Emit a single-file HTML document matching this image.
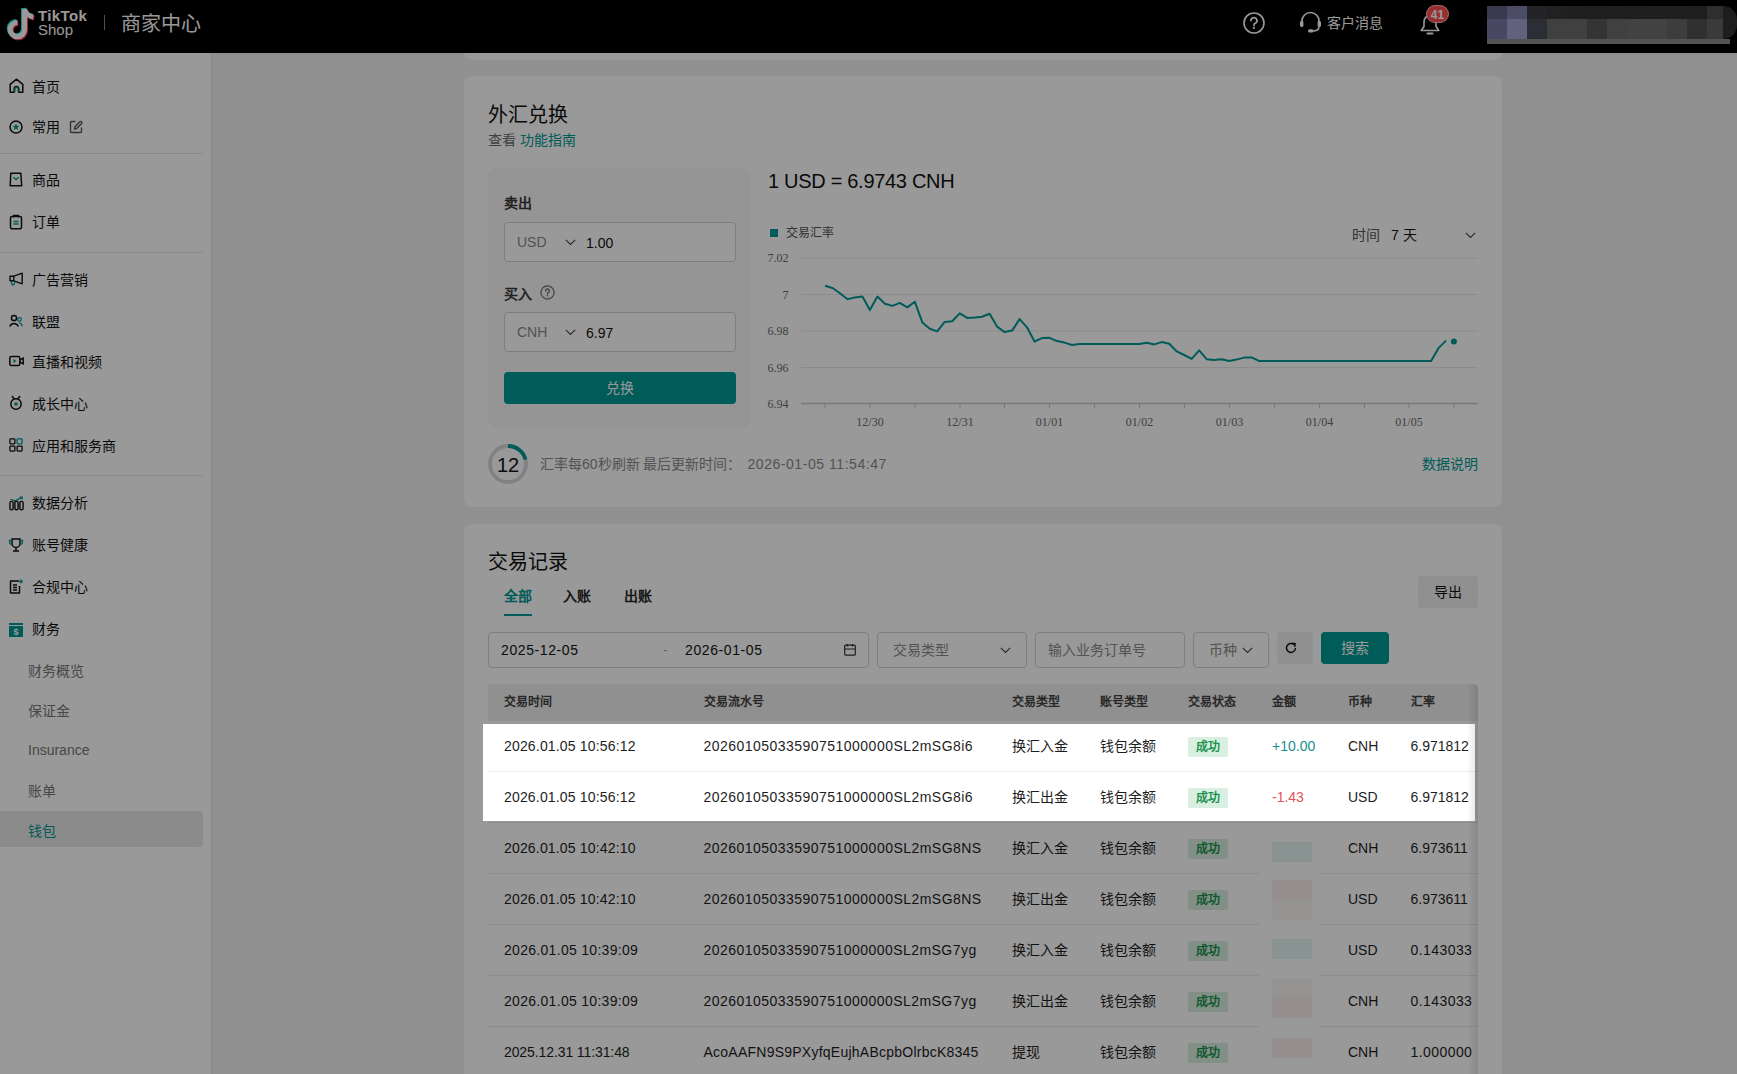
<!DOCTYPE html>
<html lang="zh-CN">
<head>
<meta charset="utf-8">
<style>
*{box-sizing:border-box;margin:0;padding:0}
html,body{width:1737px;height:1074px;overflow:hidden}
body{position:relative;background:#f1f1f1;font-family:"Liberation Sans",sans-serif;color:#121212;font-size:14px}
.t{position:absolute;white-space:nowrap;line-height:20px}
svg{position:absolute;overflow:visible}
#hdr{position:absolute;left:0;top:0;width:1737px;height:53px;background:#000;z-index:10}
#side{position:absolute;left:0;top:53px;width:212px;height:1021px;background:#fff;border-right:1px solid #e2e2e2}
.card{position:absolute;left:464px;width:1038px;background:#fff;border-radius:8px}
#ov{position:absolute;left:0;top:0;width:1737px;height:1074px;background:rgba(0,0,0,0.4);z-index:50}
#spot{position:absolute;left:483px;top:724px;width:992px;height:97px;background:#fff;z-index:60;overflow:hidden}
.nav{left:32px;color:#121212}
.sub{left:28px;color:#777}
.ico{left:9px}
.div{position:absolute;left:0;width:203px;height:1px;background:#e6e6e6}
</style>
</head>
<body>
<!-- HEADER -->
<div id="hdr">
  <svg style="left:7px;top:6px" width="30" height="34" viewBox="0 0 30 34">
    <g fill="none" stroke-width="4.6" stroke-linecap="butt" transform="translate(0.5,0.5) scale(1.1)">
      <path d="M9 14.5a6.5 6.5 0 1 0 6.5 6.5V2.5c1 4 4 6.5 8 7" stroke="#25f4ee" transform="translate(-0.9,-0.9)"/>
      <path d="M9 14.5a6.5 6.5 0 1 0 6.5 6.5V2.5c1 4 4 6.5 8 7" stroke="#fe2c55" transform="translate(0.9,0.9)"/>
      <path d="M9 14.5a6.5 6.5 0 1 0 6.5 6.5V2.5c1 4 4 6.5 8 7" stroke="#fff"/>
    </g>
  </svg>
  <div class="t" style="left:38px;top:6px;font-size:15px;font-weight:bold;color:#fff;line-height:20px;letter-spacing:0.4px">TikTok</div>
  <div class="t" style="left:38px;top:20px;font-size:15px;color:#fff;line-height:20px">Shop</div>
  <div style="position:absolute;left:104px;top:15px;width:1px;height:15px;background:#888"></div>
  <div class="t" style="left:121px;top:11px;font-size:20px;color:#fff;line-height:26px">商家中心</div>
  <svg style="left:1243px;top:12px" width="22" height="22" viewBox="0 0 22 22">
    <circle cx="11" cy="11" r="10" fill="none" stroke="#fff" stroke-width="1.6"/>
    <path d="M8 8.6a3 3 0 1 1 4.2 2.7c-.8.4-1.2.9-1.2 1.7v.6" fill="none" stroke="#fff" stroke-width="1.7" stroke-linecap="round"/>
    <circle cx="11" cy="16" r="1.1" fill="#fff"/>
  </svg>
  <svg style="left:1299px;top:11px" width="23" height="22" viewBox="0 0 23 22">
    <path d="M3 11.5V10a8.5 8.5 0 0 1 17 0v1.5" fill="none" stroke="#fff" stroke-width="1.7"/>
    <rect x="1" y="10" width="3.4" height="6" rx="1.4" fill="#fff"/>
    <rect x="18.6" y="10" width="3.4" height="6" rx="1.4" fill="#fff"/>
    <path d="M20 15.5c0 3-2.5 4.5-6.5 4.5" fill="none" stroke="#fff" stroke-width="1.6"/>
    <rect x="9" y="18.3" width="5.5" height="3.2" rx="1.6" fill="#fff"/>
  </svg>
  <div class="t" style="left:1327px;top:13px;font-size:14px;color:#fff">客户消息</div>
  <svg style="left:1420px;top:13px" width="20" height="23" viewBox="0 0 20 23">
    <path d="M10 2.5c-3.6 0-6 2.8-6 6.3v4.7L1.2 17.5h17.6L16 13.5V8.8c0-3.5-2.4-6.3-6-6.3z" fill="none" stroke="#fff" stroke-width="1.6" stroke-linejoin="round"/>
    <path d="M7.5 20.6h5" stroke="#fff" stroke-width="2" stroke-linecap="round"/>
  </svg>
  <div style="position:absolute;left:1426px;top:5px;width:23px;height:18px;border-radius:9px;background:#ff4d4f;color:#fff;font-size:12px;line-height:18px;text-align:center;border:1px solid #ffb3b3;font-weight:bold">41</div>
  <!-- blurred store -->
<div style="position:absolute;left:1487px;top:6px;width:250px;height:38px">
<div style="position:absolute;left:0px;top:0;width:20px;height:13px;background:#616182"></div>
<div style="position:absolute;left:0px;top:13px;width:20px;height:20px;background:#7878a3"></div>
<div style="position:absolute;left:20px;top:0;width:20px;height:13px;background:#7f7faa"></div>
<div style="position:absolute;left:20px;top:13px;width:20px;height:20px;background:#a3a3d2"></div>
<div style="position:absolute;left:40px;top:0;width:20px;height:13px;background:#3c3c43"></div>
<div style="position:absolute;left:40px;top:13px;width:20px;height:20px;background:#494d57"></div>
<div style="position:absolute;left:60px;top:0;width:20px;height:13px;background:#383838"></div>
<div style="position:absolute;left:60px;top:13px;width:20px;height:20px;background:#6b6b6b"></div>
<div style="position:absolute;left:80px;top:0;width:20px;height:13px;background:#353535"></div>
<div style="position:absolute;left:80px;top:13px;width:20px;height:20px;background:#6b6b6b"></div>
<div style="position:absolute;left:100px;top:0;width:20px;height:13px;background:#333333"></div>
<div style="position:absolute;left:100px;top:13px;width:20px;height:20px;background:#585858"></div>
<div style="position:absolute;left:120px;top:0;width:20px;height:13px;background:#353535"></div>
<div style="position:absolute;left:120px;top:13px;width:20px;height:20px;background:#6b6b6b"></div>
<div style="position:absolute;left:140px;top:0;width:20px;height:13px;background:#333333"></div>
<div style="position:absolute;left:140px;top:13px;width:20px;height:20px;background:#6e6e6e"></div>
<div style="position:absolute;left:160px;top:0;width:20px;height:13px;background:#353535"></div>
<div style="position:absolute;left:160px;top:13px;width:20px;height:20px;background:#6e6e6e"></div>
<div style="position:absolute;left:180px;top:0;width:20px;height:13px;background:#343434"></div>
<div style="position:absolute;left:180px;top:13px;width:20px;height:20px;background:#676767"></div>
<div style="position:absolute;left:200px;top:0;width:20px;height:13px;background:#333333"></div>
<div style="position:absolute;left:200px;top:13px;width:20px;height:20px;background:#505050"></div>
<div style="position:absolute;left:220px;top:0;width:16px;height:13px;background:#4d4d4d"></div>
<div style="position:absolute;left:220px;top:13px;width:16px;height:20px;background:#616161"></div>
<div style="position:absolute;left:236px;top:0;width:14px;height:33px;background:#323232;border-radius:0 17px 17px 0"></div>
<div style="position:absolute;left:0;top:33px;width:243px;height:5px;background:#8a8a8a"></div>
</div>
</div>
<!-- SIDEBAR -->
<div id="side"></div>
<div style="position:absolute;left:0;top:811px;width:203px;height:36px;background:#e8e8e8;border-radius:0 4px 4px 0"></div>
<div class="div" style="top:153px"></div>
<div class="div" style="top:252px"></div>
<div class="div" style="top:475px"></div>
<!-- icons -->
<svg style="left:9px;top:78px" width="15" height="16" viewBox="0 0 15 16"><path d="M1.2 14.2V6.3L7.5 1.2l6.3 5.1v7.9H9.8v-3.4a2.3 2.3 0 0 0-4.6 0v3.4z" fill="none" stroke="#121212" stroke-width="1.5" stroke-linejoin="round"/><path d="M5.9 14v-3a1.6 1.6 0 0 1 3.2 0v3" fill="none" stroke="#009995" stroke-width="1.3"/></svg>
<svg style="left:9px;top:120px" width="14" height="14" viewBox="0 0 14 14"><circle cx="7" cy="7" r="6" fill="none" stroke="#121212" stroke-width="1.5"/><path d="M7 3.6l1 2.1 2.3.3-1.7 1.6.4 2.3L7 8.8 4.9 9.9l.4-2.3L3.6 6l2.3-.3z" fill="#009995"/></svg>
<svg style="left:69px;top:120px" width="14" height="14" viewBox="0 0 14 14"><path d="M6.5 1.5H2.5a1 1 0 0 0-1 1v9a1 1 0 0 0 1 1h9a1 1 0 0 0 1-1V7.5" fill="none" stroke="#555" stroke-width="1.4"/><path d="M5.5 9l.4-2.2 5-5a1.2 1.2 0 0 1 1.7 1.7l-5 5z" fill="none" stroke="#555" stroke-width="1.4" stroke-linejoin="round"/></svg>
<svg style="left:9px;top:172px" width="14" height="15" viewBox="0 0 14 15"><path d="M1.8 1.2h10l.9 12.6H1.2z" fill="none" stroke="#121212" stroke-width="1.5" stroke-linejoin="round"/><path d="M4.3 5.3l2.7 2.3 2.7-2.3" fill="none" stroke="#009995" stroke-width="1.4"/></svg>
<svg style="left:9px;top:214px" width="14" height="16" viewBox="0 0 14 16"><rect x="1.5" y="2.6" width="11" height="12.2" rx="1.5" fill="none" stroke="#121212" stroke-width="1.5"/><path d="M4.6 3.2V1.4h4.8v1.8" fill="none" stroke="#121212" stroke-width="1.4"/><path d="M4.5 7.5h5M4.5 10h5" stroke="#009995" stroke-width="1.3"/></svg>
<svg style="left:9px;top:272px" width="15" height="15" viewBox="0 0 15 15"><path d="M1 4.2h3.8v4.6H1z" fill="none" stroke="#121212" stroke-width="1.4" stroke-linejoin="round"/><path d="M4.8 4.2l8.4-3v10.6l-8.4-3" fill="none" stroke="#121212" stroke-width="1.4" stroke-linejoin="round"/><path d="M2.6 9v2.6a1.4 1.4 0 0 0 2.8 0V9.5" fill="none" stroke="#009995" stroke-width="1.3"/></svg>
<svg style="left:9px;top:314px" width="14" height="14" viewBox="0 0 14 14"><circle cx="5" cy="4" r="2.6" fill="none" stroke="#121212" stroke-width="1.5"/><path d="M0.8 12.5a4.5 4.5 0 0 1 8.5 0" fill="none" stroke="#121212" stroke-width="1.5"/><circle cx="10.5" cy="5.5" r="1.8" fill="none" stroke="#009995" stroke-width="1.3"/><path d="M10 9.2a3 3 0 0 1 3.2 3.3" fill="none" stroke="#009995" stroke-width="1.3"/></svg>
<svg style="left:9px;top:354px" width="15" height="14" viewBox="0 0 15 14"><rect x="0.8" y="2.5" width="10" height="9" rx="1.5" fill="none" stroke="#121212" stroke-width="1.5"/><path d="M10.8 6l3.4-1.8v5.6L10.8 8" fill="none" stroke="#121212" stroke-width="1.5"/><path d="M4.5 5l3 2-3 2z" fill="#009995"/></svg>
<svg style="left:9px;top:395px" width="14" height="15" viewBox="0 0 14 15"><circle cx="7" cy="9" r="5.2" fill="none" stroke="#121212" stroke-width="1.5"/><path d="M3 1l2.3 3.2M11 1L8.7 4.2" stroke="#121212" stroke-width="1.5"/><path d="M7 6.3l.8 1.6 1.8.2-1.3 1.2.3 1.8L7 10.2l-1.6.9.3-1.8-1.3-1.2 1.8-.2z" fill="#009995"/></svg>
<svg style="left:9px;top:438px" width="14" height="14" viewBox="0 0 14 14"><rect x="0.9" y="0.9" width="5" height="5" rx="0.8" fill="none" stroke="#121212" stroke-width="1.3"/><rect x="8.1" y="0.9" width="5" height="5" rx="0.8" fill="none" stroke="#009995" stroke-width="1.3"/><rect x="0.9" y="8.1" width="5" height="5" rx="0.8" fill="none" stroke="#121212" stroke-width="1.3"/><rect x="8.1" y="8.1" width="5" height="5" rx="0.8" fill="none" stroke="#121212" stroke-width="1.3"/></svg>
<svg style="left:9px;top:496px" width="15" height="15" viewBox="0 0 15 15"><path d="M1.5 3.2l4.5 1.6 6.8-3.2M10.6 1h2.6v2.4" fill="none" stroke="#009995" stroke-width="1.2"/><rect x="0.9" y="5.4" width="3.2" height="8.4" rx="1.4" fill="none" stroke="#121212" stroke-width="1.4"/><rect x="5.9" y="5.4" width="3.2" height="8.4" rx="1.4" fill="none" stroke="#121212" stroke-width="1.4"/><rect x="10.9" y="5.4" width="3.2" height="8.4" rx="1.4" fill="none" stroke="#121212" stroke-width="1.4"/></svg>
<svg style="left:8px;top:538px" width="16" height="14" viewBox="0 0 16 14"><path d="M4 1h8v4.5a4 4 0 0 1-8 0z" fill="none" stroke="#121212" stroke-width="1.5"/><path d="M4 2.5H1.5v1.5A2.5 2.5 0 0 0 4 6.5M12 2.5h2.5v1.5A2.5 2.5 0 0 1 12 6.5" fill="none" stroke="#009995" stroke-width="1.3"/><path d="M8 9.5v3M5 13h6" stroke="#121212" stroke-width="1.5"/></svg>
<svg style="left:9px;top:579px" width="15" height="15" viewBox="0 0 15 15"><path d="M10 2H1.5v12h9V7" fill="none" stroke="#121212" stroke-width="1.5" stroke-linejoin="round"/><path d="M4 6h4M4 8.5h4M4 11h4" stroke="#121212" stroke-width="1.3"/><path d="M12 0.5v4M10 2.5h4" stroke="#009995" stroke-width="1.3"/></svg>
<svg style="left:9px;top:623px" width="14" height="14" viewBox="0 0 14 14"><rect x="0" y="0" width="14" height="2" fill="#009995"/><rect x="0" y="3" width="14" height="11" fill="#009995"/><text x="7" y="12" font-size="9" font-family="Liberation Sans" font-weight="bold" fill="#fff" text-anchor="middle">$</text></svg>
<!-- labels -->
<div class="t nav" style="top:76.5px">首页</div>
<div class="t nav" style="top:116.5px">常用</div>
<div class="t nav" style="top:169.5px">商品</div>
<div class="t nav" style="top:211.5px">订单</div>
<div class="t nav" style="top:269.5px">广告营销</div>
<div class="t nav" style="top:311.5px">联盟</div>
<div class="t nav" style="top:351.5px">直播和视频</div>
<div class="t nav" style="top:393.5px">成长中心</div>
<div class="t nav" style="top:435.5px">应用和服务商</div>
<div class="t nav" style="top:492.5px">数据分析</div>
<div class="t nav" style="top:534.5px">账号健康</div>
<div class="t nav" style="top:576.5px">合规中心</div>
<div class="t nav" style="top:618.5px">财务</div>
<div class="t sub" style="top:660.5px">财务概览</div>
<div class="t sub" style="top:700.5px">保证金</div>
<div class="t sub" style="top:739.5px">Insurance</div>
<div class="t sub" style="top:780.5px">账单</div>
<div class="t sub" style="top:820.5px;color:#009995">钱包</div>
<!-- MAIN -->
<div class="card" style="top:-20px;height:80px"></div>
<div class="card" style="top:76px;height:431px"></div>
<div class="t" style="left:488px;top:102px;font-size:20px;line-height:26px;color:#121212">外汇兑换</div>
<div class="t" style="left:488px;top:130px;color:#6b6b6b">查看 <span style="color:#009995">功能指南</span></div>
<!-- exchange box -->
<div style="position:absolute;left:488px;top:168px;width:263px;height:259px;background:#f8f8f8;border-radius:8px"></div>
<div class="t" style="left:504px;top:193px;font-weight:bold;color:#3a3a3a">卖出</div>
<div style="position:absolute;left:504px;top:222px;width:232px;height:40px;border:1px solid #d2d2d2;border-radius:4px;background:#fff"></div>
<div class="t" style="left:517px;top:232px;color:#8a8a8a">USD</div>
<svg style="left:565px;top:239px" width="11" height="6" viewBox="0 0 11 6"><path d="M0.8 0.8l4.7 4.6 4.7-4.6" fill="none" stroke="#444" stroke-width="1.1"/></svg>
<div class="t" style="left:586px;top:233px;color:#121212">1.00</div>
<div class="t" style="left:504px;top:284px;font-weight:bold;color:#3a3a3a">买入</div>
<svg style="left:540px;top:285px" width="15" height="15" viewBox="0 0 15 15"><circle cx="7.5" cy="7.5" r="6.6" fill="none" stroke="#6a6a6a" stroke-width="1.2"/><path d="M5.6 5.9a1.9 1.9 0 1 1 2.7 1.7c-.5.3-.8.6-.8 1.1v.4" fill="none" stroke="#6a6a6a" stroke-width="1.3" stroke-linecap="round"/><circle cx="7.5" cy="10.8" r=".8" fill="#6a6a6a"/></svg>
<div style="position:absolute;left:504px;top:312px;width:232px;height:40px;border:1px solid #d2d2d2;border-radius:4px;background:#fff"></div>
<div class="t" style="left:517px;top:322px;color:#8a8a8a">CNH</div>
<svg style="left:565px;top:329px" width="11" height="6" viewBox="0 0 11 6"><path d="M0.8 0.8l4.7 4.6 4.7-4.6" fill="none" stroke="#444" stroke-width="1.1"/></svg>
<div class="t" style="left:586px;top:323px;color:#121212">6.97</div>
<div style="position:absolute;left:504px;top:372px;width:232px;height:32px;background:#009995;border-radius:4px;color:#fff;text-align:center;line-height:32px;font-size:14px">兑换</div>
<!-- rate -->
<div class="t" style="left:768px;top:168px;font-size:20px;line-height:26px;color:#121212;letter-spacing:-0.3px">1 USD = 6.9743 CNH</div>
<div style="position:absolute;left:770px;top:229px;width:8px;height:8px;background:#009995"></div>
<div class="t" style="left:786px;top:223px;font-size:12px;color:#555">交易汇率</div>
<div class="t" style="left:1352px;top:225px;color:#555">时间</div>
<div class="t" style="left:1391px;top:225px;color:#121212">7 天</div>
<svg style="left:1465px;top:232px" width="11" height="6" viewBox="0 0 11 6"><path d="M0.8 0.8l4.7 4.6 4.7-4.6" fill="none" stroke="#444" stroke-width="1.1"/></svg>
<svg style="left:760px;top:245px" width="730" height="190" viewBox="760 245 730 190">
  <g stroke="#e8e8e8" stroke-width="1">
    <path d="M801 258H1478M801 294.5H1478M801 331H1478M801 367.5H1478"/>
  </g>
  <path d="M801 403.5H1478" stroke="#c8c8c8" stroke-width="1.5"/>
  <g stroke="#c8c8c8" stroke-width="1">
    <path d="M825 404v4M870 404v4M915 404v4M960 404v4M1004.5 404v4M1049.5 404v4M1094.5 404v4M1139.5 404v4M1184.5 404v4M1229.5 404v4M1274.5 404v4M1319.5 404v4M1364.5 404v4M1409 404v4M1454 404v4"/>
  </g>
  <g font-family="Liberation Serif" font-size="12" fill="#6b6b6b">
    <text x="788.5" y="261.8" text-anchor="end">7.02</text>
    <text x="788.5" y="298.8" text-anchor="end">7</text>
    <text x="788.5" y="334.8" text-anchor="end">6.98</text>
    <text x="788.5" y="371.8" text-anchor="end">6.96</text>
    <text x="788.5" y="407.8" text-anchor="end">6.94</text>
    <text x="870" y="425.5" text-anchor="middle">12/30</text>
    <text x="960" y="425.5" text-anchor="middle">12/31</text>
    <text x="1049.5" y="425.5" text-anchor="middle">01/01</text>
    <text x="1139.5" y="425.5" text-anchor="middle">01/02</text>
    <text x="1229.5" y="425.5" text-anchor="middle">01/03</text>
    <text x="1319.5" y="425.5" text-anchor="middle">01/04</text>
    <text x="1409" y="425.5" text-anchor="middle">01/05</text>
  </g>
  <polyline fill="none" stroke="#009995" stroke-width="2" stroke-linejoin="round" points="825.0,285.7 832.5,288.0 840.0,293.2 847.5,299.2 854.9,297.4 862.4,296.6 869.9,310.1 877.4,296.6 884.9,303.7 892.4,305.9 899.8,302.9 907.3,307.4 914.8,301.7 922.3,322.4 929.8,328.7 937.2,331.4 944.7,321.9 952.2,321.3 959.7,313.4 967.2,317.9 974.7,317.6 982.1,316.7 989.6,313.7 997.1,326.6 1004.6,332.1 1012.1,330.6 1019.6,319.1 1027.0,327.3 1034.5,341.5 1042.0,338.1 1049.5,337.8 1057.0,341.1 1064.5,342.6 1072.0,345.0 1079.4,344.0 1086.9,344.0 1094.4,344.0 1101.9,344.0 1109.4,344.0 1116.8,344.0 1124.3,344.0 1131.8,344.0 1139.3,344.0 1146.8,342.8 1154.3,344.4 1161.8,342.1 1169.2,343.7 1176.7,351.4 1184.2,355.0 1191.7,358.9 1199.2,350.3 1206.6,359.2 1214.1,360.0 1221.6,359.3 1229.1,360.9 1236.6,359.6 1244.1,357.6 1251.5,357.4 1259.0,360.9 1266.5,361.0 1274.0,361.0 1281.5,361.0 1289.0,361.0 1296.4,361.0 1303.9,361.0 1311.4,361.0 1318.9,361.0 1326.4,361.0 1333.9,361.0 1341.3,361.0 1348.8,361.0 1356.3,361.0 1363.8,361.0 1371.3,361.0 1378.8,361.0 1386.2,361.0 1393.7,361.0 1401.2,361.0 1408.7,361.0 1416.2,361.0 1423.7,361.0 1431.1,361.0 1438.6,347.9 1446.1,340.6"/>
  <circle cx="1453.9" cy="341.4" r="3" fill="#009995"/>
</svg>
<!-- countdown -->
<svg style="left:488px;top:444px" width="40" height="40" viewBox="0 0 40 40">
  <circle cx="20" cy="20" r="18" fill="none" stroke="#d8d8d8" stroke-width="3.8"/>
  <path d="M20 2A18 18 0 0 1 37.5 15.6" fill="none" stroke="#009995" stroke-width="3.8"/>
</svg>
<div class="t" style="left:488px;top:452px;width:40px;text-align:center;font-size:20px;line-height:26px;color:#121212">12</div>
<div class="t" style="left:540px;top:454px;color:#8a8a8a">汇率每60秒刷新 最后更新时间：<span style="margin-left:6px;letter-spacing:0.55px">2026-01-05 11:54:47</span></div>
<div class="t" style="left:1422px;top:454px;color:#009995">数据说明</div>
<!-- RECORDS -->
<div class="card" style="top:524px;height:600px"></div>
<div class="t" style="left:488px;top:549px;font-size:20px;line-height:26px;color:#121212">交易记录</div>
<div class="t" style="left:504px;top:586px;color:#009995;font-weight:bold">全部</div>
<div style="position:absolute;left:504px;top:614px;width:28px;height:2px;background:#009995"></div>
<div class="t" style="left:563px;top:586px;color:#2a2a2a;font-weight:bold">入账</div>
<div class="t" style="left:624px;top:586px;color:#2a2a2a;font-weight:bold">出账</div>
<div style="position:absolute;left:1418px;top:576px;width:60px;height:32px;background:#f0f0f0;border-radius:4px;text-align:center;line-height:32px;color:#121212">导出</div>
<!-- filters -->
<div style="position:absolute;left:488px;top:632px;width:381px;height:36px;border:1px solid #d2d2d2;border-radius:4px"></div>
<div class="t" style="left:501px;top:640px;color:#121212;letter-spacing:0.6px">2025-12-05</div>
<div class="t" style="left:663px;top:640px;color:#aaa">-</div>
<div class="t" style="left:685px;top:640px;color:#121212;letter-spacing:0.6px">2026-01-05</div>
<svg style="left:844px;top:644px" width="12" height="12" viewBox="0 0 12 12"><rect x="0.7" y="1.2" width="10.6" height="10" rx="1" fill="none" stroke="#333" stroke-width="1.2"/><path d="M1 5h10M3.5 0v2.5M8.5 0v2.5" stroke="#333" stroke-width="1.2"/></svg>
<div style="position:absolute;left:877px;top:632px;width:150px;height:36px;border:1px solid #d2d2d2;border-radius:4px"></div>
<div class="t" style="left:893px;top:640px;color:#8a8a8a">交易类型</div>
<svg style="left:1000px;top:647px" width="11" height="6" viewBox="0 0 11 6"><path d="M0.8 0.8l4.7 4.6 4.7-4.6" fill="none" stroke="#444" stroke-width="1.1"/></svg>
<div style="position:absolute;left:1035px;top:632px;width:150px;height:36px;border:1px solid #d2d2d2;border-radius:4px"></div>
<div class="t" style="left:1048px;top:640px;color:#8a8a8a">输入业务订单号</div>
<div style="position:absolute;left:1193px;top:632px;width:76px;height:36px;border:1px solid #d2d2d2;border-radius:4px"></div>
<div class="t" style="left:1209px;top:640px;color:#8a8a8a">币种</div>
<svg style="left:1242px;top:647px" width="11" height="6" viewBox="0 0 11 6"><path d="M0.8 0.8l4.7 4.6 4.7-4.6" fill="none" stroke="#444" stroke-width="1.1"/></svg>
<div style="position:absolute;left:1277px;top:632px;width:36px;height:32px;background:#f0f0f0;border-radius:4px"></div>
<svg style="left:1285px;top:642px" width="12" height="12" viewBox="0 0 12 12"><path d="M10.5 6A4.5 4.5 0 1 1 9 2.6" fill="none" stroke="#121212" stroke-width="1.5"/><path d="M6.8 1.2l3.3.4-.4 3.3" fill="none" stroke="#121212" stroke-width="1.5"/></svg>
<div style="position:absolute;left:1321px;top:632px;width:68px;height:32px;background:#009995;border-radius:4px;color:#fff;text-align:center;line-height:32px">搜索</div>
<!-- table -->
<div id="tbl" style="position:absolute;left:488px;top:684px;width:990px;height:390px;overflow:hidden;border-radius:4px 4px 0 0;color:#1e1e1e">
<div style="position:absolute;left:0;top:0;width:990px;height:37px;background:#f0f0f0"></div>
<div class="t" style="left:16px;top:8px;font-size:12px;color:#444;font-weight:bold">交易时间</div>
<div class="t" style="left:215.5px;top:8px;font-size:12px;color:#444;font-weight:bold">交易流水号</div>
<div class="t" style="left:523.5px;top:8px;font-size:12px;color:#444;font-weight:bold">交易类型</div>
<div class="t" style="left:611.5px;top:8px;font-size:12px;color:#444;font-weight:bold">账号类型</div>
<div class="t" style="left:700px;top:8px;font-size:12px;color:#444;font-weight:bold">交易状态</div>
<div class="t" style="left:784px;top:8px;font-size:12px;color:#444;font-weight:bold">金额</div>
<div class="t" style="left:860px;top:8px;font-size:12px;color:#444;font-weight:bold">币种</div>
<div class="t" style="left:922.5px;top:8px;font-size:12px;color:#444;font-weight:bold">汇率</div>
<div style="position:absolute;left:0px;top:87px;width:990px;height:1px;background:#ebebeb"></div>
<div class="t" style="left:16px;top:52px;letter-spacing:0.17px">2026.01.05 10:56:12</div>
<div class="t" style="left:215.5px;top:52px;letter-spacing:0.47px">20260105033590751000000SL2mSG8i6</div>
<div class="t" style="left:523.5px;top:52px">换汇入金</div>
<div class="t" style="left:611.5px;top:52px">钱包余额</div>
<div style="position:absolute;left:700px;top:53px;width:40px;height:20px;background:#d8efe1;color:#20934f;font-size:12px;line-height:20px;text-align:center;border-radius:2px;font-weight:bold">成功</div>
<div class="t" style="left:784px;top:52px;color:#168e8b">+10.00</div>
<div class="t" style="left:860px;top:52px">CNH</div>
<div class="t" style="left:922.5px;top:52px;letter-spacing:0">6.971812</div>
<div style="position:absolute;left:0px;top:138px;width:990px;height:1px;background:#ebebeb"></div>
<div class="t" style="left:16px;top:103px;letter-spacing:0.17px">2026.01.05 10:56:12</div>
<div class="t" style="left:215.5px;top:103px;letter-spacing:0.47px">20260105033590751000000SL2mSG8i6</div>
<div class="t" style="left:523.5px;top:103px">换汇出金</div>
<div class="t" style="left:611.5px;top:103px">钱包余额</div>
<div style="position:absolute;left:700px;top:104px;width:40px;height:20px;background:#d8efe1;color:#20934f;font-size:12px;line-height:20px;text-align:center;border-radius:2px;font-weight:bold">成功</div>
<div class="t" style="left:784px;top:103px;color:#e05558">-1.43</div>
<div class="t" style="left:860px;top:103px">USD</div>
<div class="t" style="left:922.5px;top:103px;letter-spacing:0">6.971812</div>
<div style="position:absolute;left:0px;top:189px;width:990px;height:1px;background:#ebebeb"></div>
<div class="t" style="left:16px;top:154px;letter-spacing:0.17px">2026.01.05 10:42:10</div>
<div class="t" style="left:215.5px;top:154px;letter-spacing:0.47px">20260105033590751000000SL2mSG8NS</div>
<div class="t" style="left:523.5px;top:154px">换汇入金</div>
<div class="t" style="left:611.5px;top:154px">钱包余额</div>
<div style="position:absolute;left:700px;top:155px;width:40px;height:20px;background:#d8efe1;color:#20934f;font-size:12px;line-height:20px;text-align:center;border-radius:2px;font-weight:bold">成功</div>
<div class="t" style="left:860px;top:154px">CNH</div>
<div class="t" style="left:922.5px;top:154px;letter-spacing:0">6.973611</div>
<div style="position:absolute;left:0px;top:240px;width:990px;height:1px;background:#ebebeb"></div>
<div class="t" style="left:16px;top:205px;letter-spacing:0.17px">2026.01.05 10:42:10</div>
<div class="t" style="left:215.5px;top:205px;letter-spacing:0.47px">20260105033590751000000SL2mSG8NS</div>
<div class="t" style="left:523.5px;top:205px">换汇出金</div>
<div class="t" style="left:611.5px;top:205px">钱包余额</div>
<div style="position:absolute;left:700px;top:206px;width:40px;height:20px;background:#d8efe1;color:#20934f;font-size:12px;line-height:20px;text-align:center;border-radius:2px;font-weight:bold">成功</div>
<div class="t" style="left:860px;top:205px">USD</div>
<div class="t" style="left:922.5px;top:205px;letter-spacing:0">6.973611</div>
<div style="position:absolute;left:0px;top:291px;width:990px;height:1px;background:#ebebeb"></div>
<div class="t" style="left:16px;top:256px;letter-spacing:0.3px">2026.01.05 10:39:09</div>
<div class="t" style="left:215.5px;top:256px;letter-spacing:0.46px">20260105033590751000000SL2mSG7yg</div>
<div class="t" style="left:523.5px;top:256px">换汇入金</div>
<div class="t" style="left:611.5px;top:256px">钱包余额</div>
<div style="position:absolute;left:700px;top:257px;width:40px;height:20px;background:#d8efe1;color:#20934f;font-size:12px;line-height:20px;text-align:center;border-radius:2px;font-weight:bold">成功</div>
<div class="t" style="left:860px;top:256px">USD</div>
<div class="t" style="left:922.5px;top:256px;letter-spacing:0.43px">0.143033</div>
<div style="position:absolute;left:0px;top:342px;width:990px;height:1px;background:#ebebeb"></div>
<div class="t" style="left:16px;top:307px;letter-spacing:0.3px">2026.01.05 10:39:09</div>
<div class="t" style="left:215.5px;top:307px;letter-spacing:0.46px">20260105033590751000000SL2mSG7yg</div>
<div class="t" style="left:523.5px;top:307px">换汇出金</div>
<div class="t" style="left:611.5px;top:307px">钱包余额</div>
<div style="position:absolute;left:700px;top:308px;width:40px;height:20px;background:#d8efe1;color:#20934f;font-size:12px;line-height:20px;text-align:center;border-radius:2px;font-weight:bold">成功</div>
<div class="t" style="left:860px;top:307px">CNH</div>
<div class="t" style="left:922.5px;top:307px;letter-spacing:0.43px">0.143033</div>
<div style="position:absolute;left:0px;top:393px;width:990px;height:1px;background:#ebebeb"></div>
<div class="t" style="left:16px;top:358px;letter-spacing:-0.1px">2025.12.31 11:31:48</div>
<div class="t" style="left:215.5px;top:358px;letter-spacing:0.24px">AcoAAFN9S9PXyfqEujhABcpbOlrbcK8345</div>
<div class="t" style="left:523.5px;top:358px">提现</div>
<div class="t" style="left:611.5px;top:358px">钱包余额</div>
<div style="position:absolute;left:700px;top:359px;width:40px;height:20px;background:#d8efe1;color:#20934f;font-size:12px;line-height:20px;text-align:center;border-radius:2px;font-weight:bold">成功</div>
<div class="t" style="left:860px;top:358px">CNH</div>
<div class="t" style="left:922.5px;top:358px;letter-spacing:0.43px">1.000000</div>
<div style="position:absolute;left:771px;top:140px;width:60px;height:400px;background:#fff"></div>
<div style="position:absolute;left:784px;top:158px;width:40px;height:20px;background:#e3f5f4"></div>
<div style="position:absolute;left:784px;top:196px;width:40px;height:20px;background:#fbefef"></div>
<div style="position:absolute;left:784px;top:216px;width:40px;height:20px;background:#f9f4f4"></div>
<div style="position:absolute;left:784px;top:255px;width:40px;height:20px;background:#e3f5f4"></div>
<div style="position:absolute;left:784px;top:294px;width:40px;height:20px;background:#f9f4f4"></div>
<div style="position:absolute;left:784px;top:314px;width:40px;height:20px;background:#fbefef"></div>
<div style="position:absolute;left:784px;top:354px;width:40px;height:20px;background:#fbefef"></div>
<div style="position:absolute;right:0;top:0;width:10px;height:400px;background:linear-gradient(to left,rgba(0,0,0,0.10),rgba(0,0,0,0))"></div>
</div>
<div id="ov"></div>
<div id="spot" style="color:#1e1e1e">
<div style="position:absolute;left:5px;top:47px;width:990px;height:1px;background:#ebebeb"></div>
<div class="t" style="left:21px;top:12px;letter-spacing:0.17px">2026.01.05 10:56:12</div>
<div class="t" style="left:220.5px;top:12px;letter-spacing:0.47px">20260105033590751000000SL2mSG8i6</div>
<div class="t" style="left:528.5px;top:12px">换汇入金</div>
<div class="t" style="left:616.5px;top:12px">钱包余额</div>
<div style="position:absolute;left:705px;top:13px;width:40px;height:20px;background:#d8efe1;color:#20934f;font-size:12px;line-height:20px;text-align:center;border-radius:2px;font-weight:bold">成功</div>
<div class="t" style="left:789px;top:12px;color:#168e8b">+10.00</div>
<div class="t" style="left:865px;top:12px">CNH</div>
<div class="t" style="left:927.5px;top:12px;letter-spacing:0">6.971812</div>
<div style="position:absolute;left:5px;top:98px;width:990px;height:1px;background:#ebebeb"></div>
<div class="t" style="left:21px;top:63px;letter-spacing:0.17px">2026.01.05 10:56:12</div>
<div class="t" style="left:220.5px;top:63px;letter-spacing:0.47px">20260105033590751000000SL2mSG8i6</div>
<div class="t" style="left:528.5px;top:63px">换汇出金</div>
<div class="t" style="left:616.5px;top:63px">钱包余额</div>
<div style="position:absolute;left:705px;top:64px;width:40px;height:20px;background:#d8efe1;color:#20934f;font-size:12px;line-height:20px;text-align:center;border-radius:2px;font-weight:bold">成功</div>
<div class="t" style="left:789px;top:63px;color:#e05558">-1.43</div>
<div class="t" style="left:865px;top:63px">USD</div>
<div class="t" style="left:927.5px;top:63px;letter-spacing:0">6.971812</div>
<div style="position:absolute;left:984px;top:0;width:10px;height:97px;background:linear-gradient(to left,rgba(0,0,0,0.10),rgba(0,0,0,0))"></div>
</div>
</body>
</html>
